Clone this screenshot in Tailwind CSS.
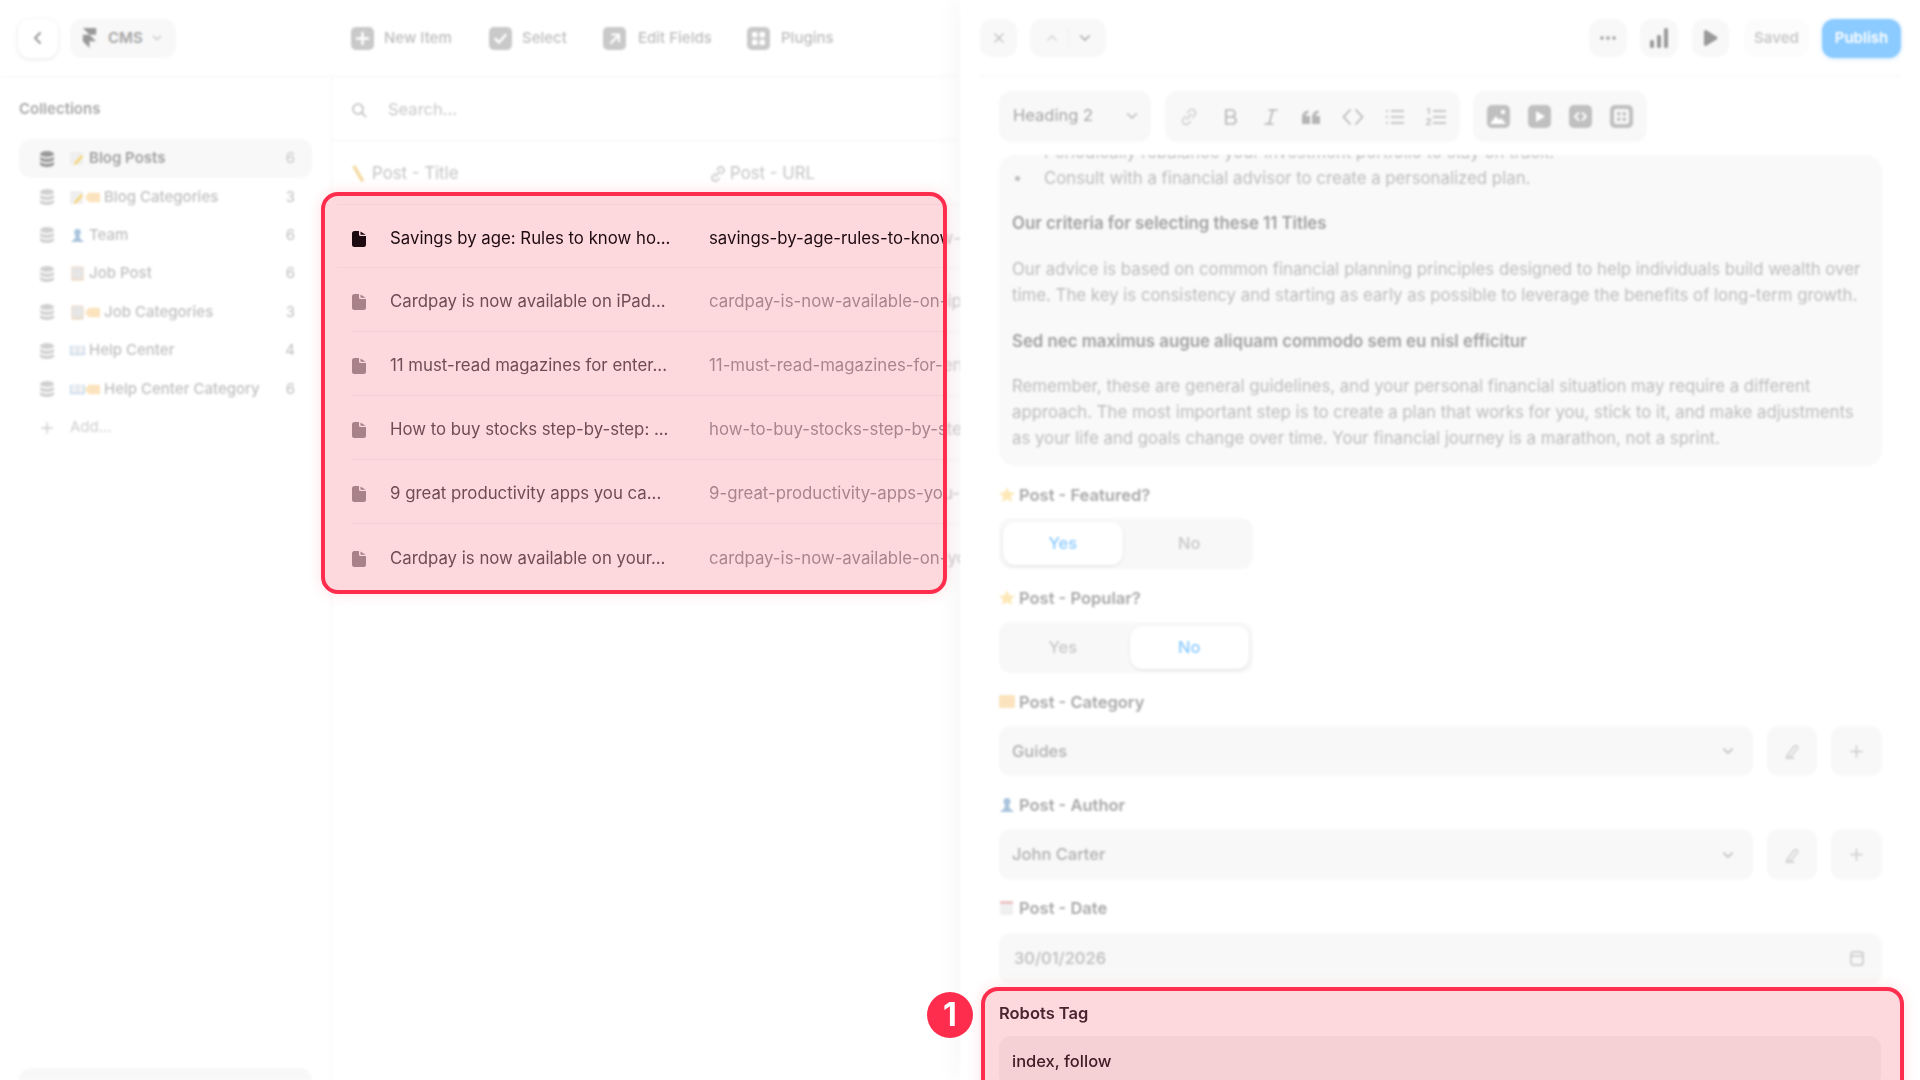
<!DOCTYPE html>
<html lang="en">
<head>
    <meta charset="UTF-8">
    <meta name="viewport" content="width=device-width, initial-scale=1.0">
    <title>CMS - Blog Posts</title>
    <script src="https://cdn.jsdelivr.net/npm/@tailwindcss/browser@4"></script>
</head>
<body class="bg-white font-['Inter',sans-serif] overflow-hidden">

    <!-- icons used many times -->
    <svg class="hidden">
        <symbol id="db" viewBox="0 0 14 16"><ellipse cx="7" cy="3" rx="7" ry="3" fill="currentColor"/><path d="M0 5.500c1.500 1.600 4 2.200 7 2.200s5.500-.6 7-2.200V8c0 1.700-3.100 3-7 3S0 9.700 0 8z" fill="currentColor"/><path d="M0 10.500c1.500 1.600 4 2.200 7 2.200s5.500-.6 7-2.200V13c0 1.700-3.100 3-7 3s-7-1.300-7-3z" fill="currentColor"/></symbol>
        <symbol id="file" viewBox="0 0 14 16"><path d="M2.500 0H7v3.500A1.500 1.500 0 0 0 8.500 5H14v8.500a2.500 2.500 0 0 1-2.500 2.500h-9A2.500 2.500 0 0 1 0 13.500v-11A2.500 2.500 0 0 1 2.500 0zM8.500 0.500 13.700 3.800H9a.5.5 0 0 1-.5-.5z" fill="currentColor"/></symbol>
        <symbol id="pencil" viewBox="0 0 16 16"><rect x="0" y="1" width="14" height="14" rx="2" fill="#efefef"/><path d="M12 4l2 2-7 8-3 1 1-3z" fill="#f6d77e"/></symbol>
        <symbol id="tag" viewBox="0 0 16 16"><path d="M4 3h11a1 1 0 0 1 1 1v8a1 1 0 0 1-1 1H4L0 8z" fill="#fbe3bd"/></symbol>
        <symbol id="person" viewBox="0 0 16 16"><circle cx="8" cy="4.500" r="3.500" fill="#a9c4dc"/><path d="M6 7h4l.5 4L15 15H1l4.500-4z" fill="#a9c4dc"/></symbol>
        <symbol id="pad" viewBox="0 0 16 16"><rect x="1.500" y="0.500" width="13" height="15" rx="1.500" fill="#ecd6bf"/><rect x="2.500" y="1.500" width="11" height="12" fill="#e6e6e6"/></symbol>
        <symbol id="book" viewBox="0 0 16 16"><path d="M0 3h16v10H0z" fill="#c5d9ec"/><path d="M1.500 3.500h6v8h-6zM8.500 3.500h6v8h-6z" fill="#f2f2f2"/></symbol>
        <symbol id="star" viewBox="0 0 16 16"><path d="M8 0l2.400 5.200 5.600.6-4.100 3.700 1.200 5.500L8 12.200 2.900 15l1.200-5.500L0 5.800l5.600-.6z" fill="#fde9b8"/></symbol>
        <symbol id="chev" viewBox="0 0 10 10"><path d="M2 3.500 5 6.500 8 3.500" fill="none" stroke="currentColor" stroke-width="1.300" stroke-linecap="round" stroke-linejoin="round"/></symbol>
        <symbol id="pen" viewBox="0 0 16 16"><path d="M3 12.500 10.500 3a2 2 0 0 1 3 2.500L6.500 13.500 3 14.500zM2 15h8" fill="none" stroke="currentColor" stroke-width="1.300" stroke-linecap="round" stroke-linejoin="round"/></symbol>
        <symbol id="plus" viewBox="0 0 16 16"><path d="M8 2v12M2 8h12" fill="none" stroke="currentColor" stroke-width="1.600" stroke-linecap="round"/></symbol>
    </svg>

    <!-- dimmed page -->
    <div class="flex w-[1920px] h-[1080px] overflow-hidden blur-[1px]">

        <!-- left: cms -->
        <div class="w-[960px] shrink-0 flex flex-col overflow-hidden">
            <div class="h-[77px] shrink-0 flex items-center border-b border-[#f6f6f6] pl-[18px]">
                <div class="w-[40px] h-[39px] rounded-xl bg-white shadow-[0_1px_5px_rgba(0,0,0,0.1)] flex items-center justify-center text-[#999]">
                    <svg class="w-[14px] h-[14px]" viewBox="0 0 14 14"><path d="M9 2 4 7l5 5" fill="none" stroke="currentColor" stroke-width="2" stroke-linecap="round" stroke-linejoin="round"/></svg>
                </div>
                <div class="ml-[12px] w-[106px] h-[39px] rounded-xl bg-[#f8f8f8] flex items-center pl-[12px] text-[#a5a5a5]">
                    <svg class="w-[15px] h-[20px]" viewBox="0 0 16 24"><path d="M0 0h16v8H8zM0 8h8l8 8H8v8l-8-8z" fill="#999"/></svg>
                    <span class="ml-[11px] text-[15px] font-semibold">CMS</span>
                    <svg class="ml-[8px] w-[12px] h-[12px] text-[#ccc]"><use href="#chev"/></svg>
                </div>
                <div class="ml-[175px] flex items-center text-[15px] font-medium text-[#bdbdbd]">
                    <svg class="w-[23px] h-[23px]" viewBox="0 0 23 23"><rect width="23" height="23" rx="5" fill="#c9c9c9"/><path d="M11.500 6v11M6 11.500h11" stroke="#fff" stroke-width="2.500" stroke-linecap="round"/></svg>
                    <span class="ml-[10px] w-[105px]">New Item</span>
                    <svg class="w-[23px] h-[23px]" viewBox="0 0 23 23"><rect width="23" height="23" rx="5" fill="#c9c9c9"/><path d="m6.500 12 3.500 3.500 6.500-7.500" fill="none" stroke="#fff" stroke-width="2.500" stroke-linecap="round" stroke-linejoin="round"/></svg>
                    <span class="ml-[10px] w-[81px]">Select</span>
                    <svg class="w-[23px] h-[23px]" viewBox="0 0 23 23"><rect width="23" height="23" rx="5" fill="#c9c9c9"/><path d="M8 16 15.500 8M9 7.500h7v7" fill="none" stroke="#fff" stroke-width="2.200" stroke-linecap="round" stroke-linejoin="round"/></svg>
                    <span class="ml-[12px] w-[109px]">Edit Fields</span>
                    <svg class="w-[23px] h-[23px]" viewBox="0 0 23 23"><rect width="23" height="23" rx="5" fill="#c9c9c9"/><rect x="5" y="5" width="5.500" height="5.500" rx="1.500" fill="#fff"/><rect x="12.500" y="5" width="5.500" height="5.500" rx="1.500" fill="#fff"/><rect x="5" y="12.500" width="5.500" height="5.500" rx="1.500" fill="#fff"/><rect x="12.500" y="12.500" width="5.500" height="5.500" rx="1.500" fill="#fff"/></svg>
                    <span class="ml-[11px]">Plugins</span>
                </div>
            </div>

            <div class="flex-1 flex min-h-0">
                <!-- collections -->
                <div class="w-[332px] shrink-0 border-r border-[#f6f6f6] flex flex-col px-[19px] pt-[22px]">
                    <div class="h-[20px] text-[15px] leading-[20px] font-semibold text-[#a8a8a8] mb-[20px]">Collections</div>
                    <div class="h-[39px] rounded-xl bg-[#f8f8f8] flex items-center pl-[21px] pr-[17px] text-[15px] font-semibold text-[#a0a0a0]">
                        <svg class="w-[14px] h-[16px] text-[#999]"><use href="#db"/></svg>
                        <svg class="ml-[16px] w-[15px] h-[15px]"><use href="#pencil"/></svg>
                        <span class="ml-[4px] flex-1">Blog Posts</span><span class="font-normal text-[#c8c8c8]">6</span>
                    </div>
                    <div class="h-[38px] flex items-center pl-[21px] pr-[17px] text-[15px] font-medium text-[#c0c0c0]">
                        <svg class="w-[14px] h-[16px] text-[#d0d0d0]"><use href="#db"/></svg>
                        <svg class="ml-[16px] w-[15px] h-[15px]"><use href="#pencil"/></svg><svg class="w-[15px] h-[15px]"><use href="#tag"/></svg>
                        <span class="ml-[4px] flex-1">Blog Categories</span><span class="font-normal">3</span>
                    </div>
                    <div class="h-[38px] flex items-center pl-[21px] pr-[17px] text-[15px] font-medium text-[#c0c0c0]">
                        <svg class="w-[14px] h-[16px] text-[#d0d0d0]"><use href="#db"/></svg>
                        <svg class="ml-[16px] w-[15px] h-[15px]"><use href="#person"/></svg>
                        <span class="ml-[4px] flex-1">Team</span><span class="font-normal">6</span>
                    </div>
                    <div class="h-[39px] flex items-center pl-[21px] pr-[17px] text-[15px] font-medium text-[#c0c0c0]">
                        <svg class="w-[14px] h-[16px] text-[#d0d0d0]"><use href="#db"/></svg>
                        <svg class="ml-[16px] w-[15px] h-[15px]"><use href="#pad"/></svg>
                        <span class="ml-[4px] flex-1">Job Post</span><span class="font-normal">6</span>
                    </div>
                    <div class="h-[38px] flex items-center pl-[21px] pr-[17px] text-[15px] font-medium text-[#c0c0c0]">
                        <svg class="w-[14px] h-[16px] text-[#d0d0d0]"><use href="#db"/></svg>
                        <svg class="ml-[16px] w-[15px] h-[15px]"><use href="#pad"/></svg><svg class="w-[15px] h-[15px]"><use href="#tag"/></svg>
                        <span class="ml-[4px] flex-1">Job Categories</span><span class="font-normal">3</span>
                    </div>
                    <div class="h-[39px] flex items-center pl-[21px] pr-[17px] text-[15px] font-medium text-[#c0c0c0]">
                        <svg class="w-[14px] h-[16px] text-[#d0d0d0]"><use href="#db"/></svg>
                        <svg class="ml-[16px] w-[15px] h-[15px]"><use href="#book"/></svg>
                        <span class="ml-[4px] flex-1">Help Center</span><span class="font-normal">4</span>
                    </div>
                    <div class="h-[38px] flex items-center pl-[21px] pr-[17px] text-[15px] font-medium text-[#c0c0c0]">
                        <svg class="w-[14px] h-[16px] text-[#d0d0d0]"><use href="#db"/></svg>
                        <svg class="ml-[16px] w-[15px] h-[15px]"><use href="#book"/></svg><svg class="w-[15px] h-[15px]"><use href="#tag"/></svg>
                        <span class="ml-[4px] flex-1">Help Center Category</span><span class="font-normal">6</span>
                    </div>
                    <div class="h-[39px] flex items-center pl-[21px] text-[15px] text-[#d0d0d0]">
                        <svg class="w-[14px] h-[14px]"><use href="#plus"/></svg>
                        <span class="ml-[16px]">Add...</span>
                    </div>
                    <div class="mt-auto h-[12px] rounded-t-xl bg-[#f8f8f8]"></div>
                </div>

                <!-- table -->
                <div class="flex-1 min-w-0">
                    <div class="h-[64px] border-b border-[#f6f6f6] flex items-center pl-[19px] pt-[2px] text-[16.500px] text-[#c8c8c8]">
                        <svg class="w-[16px] h-[16px]" viewBox="0 0 16 16"><circle cx="7" cy="7" r="5" fill="none" stroke="#bbb" stroke-width="1.500"/><path d="m11 11 3.500 3.500" stroke="#bbb" stroke-width="1.500" stroke-linecap="round"/></svg>
                        <span class="ml-[21px]">Search...</span>
                    </div>
                    <div class="h-[63px] flex items-center pl-[19px] pt-[2px] text-[16.800px] text-[#c4c4c4]">
                        <div class="w-[358px] flex items-center"><svg class="w-[18px] h-[18px]" viewBox="0 0 16 16"><path d="M1 1 4 .5 12 14l-3 1z" fill="#f3d9a0"/></svg><span class="ml-[3px]">Post - Title</span></div>
                        <div class="flex items-center"><svg class="w-[18px] h-[18px]" viewBox="0 0 16 16"><path d="M6 10 10 5M7 4l2-2a3 3 0 0 1 4 4l-2 2M9 12l-2 2a3 3 0 0 1-4-4l2-2" fill="none" stroke="#ccc" stroke-width="1.500" stroke-linecap="round"/></svg><span class="ml-[3px]">Post - URL</span></div>
                    </div>
                    <!-- the rows sit under the highlight; only the ends of the urls show past it -->
                    <div class="ml-[7px] text-[16.800px] text-[#ccc] whitespace-nowrap">
                        <div class="h-[64px] flex items-center pl-[370px] pt-[5px] overflow-hidden border-y border-[#f6f6f6]">savings-by-age-rules-to-know-how-much</div>
                        <div class="h-[64px] flex items-center pl-[370px] pt-[5px] overflow-hidden border-b border-[#f6f6f6]">cardpay-is-now-available-on-ipad-and-more</div>
                        <div class="h-[64px] flex items-center pl-[370px] pt-[5px] overflow-hidden border-b border-[#f6f6f6]">11-must-read-magazines-for-entrepreneurs</div>
                        <div class="h-[64px] flex items-center pl-[370px] pt-[5px] overflow-hidden border-b border-[#f6f6f6]">how-to-buy-stocks-step-by-step-guide</div>
                        <div class="h-[64px] flex items-center pl-[370px] pt-[5px] overflow-hidden border-b border-[#f6f6f6]">9-great-productivity-apps-you-can-use</div>
                        <div class="h-[64px] flex items-center pl-[370px] pt-[5px] overflow-hidden">cardpay-is-now-available-on-your-watch</div>
                    </div>
                </div>
            </div>
        </div>

        <!-- right: item editor -->
        <div class="w-[960px] shrink-0 bg-white shadow-[-4px_0_24px_rgba(0,0,0,0.04)] flex flex-col">
            <div class="h-[77px] shrink-0 ml-[20px] mr-[19px] border-b border-[#f6f6f6] flex items-center">
                <div class="w-[37px] h-[38px] rounded-xl bg-[#f8f8f8] flex items-center justify-center text-[#c4c4c4]">
                    <svg class="w-[12px] h-[12px]" viewBox="0 0 12 12"><path d="m2 2 8 8M10 2l-8 8" stroke="currentColor" stroke-width="1.500" stroke-linecap="round"/></svg>
                </div>
                <div class="ml-[13px] w-[76px] h-[38px] rounded-xl bg-[#f8f8f8] flex items-center justify-center text-[#b5b5b5]">
                    <svg class="w-[14px] h-[14px] rotate-180 text-[#dcdcdc]"><use href="#chev"/></svg>
                    <div class="w-px h-[20px] bg-[#eeeeee] mx-[9px]"></div>
                    <svg class="w-[14px] h-[14px]"><use href="#chev"/></svg>
                </div>
                <div class="ml-auto flex items-center">
                    <div class="w-[38px] h-[38px] rounded-xl bg-[#f8f8f8] flex items-center justify-center">
                        <svg class="w-[16px] h-[4px]" viewBox="0 0 16 4"><circle cx="2" cy="2" r="1.700" fill="#999"/><circle cx="8" cy="2" r="1.700" fill="#999"/><circle cx="14" cy="2" r="1.700" fill="#999"/></svg>
                    </div>
                    <div class="ml-[13px] w-[38px] h-[38px] rounded-xl bg-[#f8f8f8] flex items-center justify-center">
                        <svg class="w-[18px] h-[20px]" viewBox="0 0 18 20"><rect y="12" width="4" height="8" rx="1.500" fill="#999"/><rect x="7" y="7" width="4" height="13" rx="1.500" fill="#999"/><rect x="14" y="0" width="4" height="20" rx="1.500" fill="#999"/></svg>
                    </div>
                    <div class="ml-[14px] w-[37px] h-[38px] rounded-xl bg-[#f8f8f8] flex items-center justify-center">
                        <svg class="w-[15px] h-[18px]" viewBox="0 0 15 18"><path d="M1 2.500v13a1.500 1.500 0 0 0 2.300 1.200l10.500-6.500a1.500 1.500 0 0 0 0-2.500L3.300 1.300A1.500 1.500 0 0 0 1 2.500z" fill="#999"/></svg>
                    </div>
                    <div class="ml-[15px] w-[65px] h-[38px] rounded-xl bg-[#fcfcfc] flex items-center justify-center text-[15px] font-semibold text-[#c8c8c8]">Saved</div>
                    <div class="ml-[13px] w-[79px] h-[39px] rounded-xl bg-[#8ccbff] shadow-[0_1px_4px_rgba(140,203,255,0.4)] flex items-center justify-center text-[15px] font-semibold text-white">Publish</div>
                </div>
            </div>

            <div class="flex-1 min-h-0 pl-[39px] pr-[38px]">
                <!-- format toolbar -->
                <div class="mt-[14px] h-[51px] flex">
                    <div class="w-[152px] rounded-xl bg-[#f8f8f8] flex items-center pl-[14px] pr-[12px] pb-[2px] text-[16.500px] text-[#a5a5a5]">
                        <span class="flex-1">Heading 2</span>
                        <svg class="w-[14px] h-[14px] text-[#c4c4c4]"><use href="#chev"/></svg>
                    </div>
                    <div class="ml-[14px] w-[295px] rounded-xl bg-[#f8f8f8] flex items-center justify-between px-[13px] text-[#b5b5b5]">
                        <svg class="w-[22px] h-[22px] text-[#cccccc]" viewBox="0 0 22 22"><path d="M9 13l4-5M9.500 6.500l2-2a3.500 3.500 0 0 1 5 5l-2 2M12.500 15.500l-2 2a3.500 3.500 0 0 1-5-5l2-2" fill="none" stroke="currentColor" stroke-width="1.500" stroke-linecap="round"/></svg>
                        <svg class="w-[22px] h-[22px]" viewBox="0 0 22 22"><path d="M7 4h5.500a3.500 3.500 0 0 1 0 7H7zM7 11h6.500a3.500 3.500 0 0 1 0 7H7z" fill="none" stroke="currentColor" stroke-width="1.700"/></svg>
                        <svg class="w-[22px] h-[22px]" viewBox="0 0 22 22"><path d="M9 4h8M5 18h8M13 4 9 18" fill="none" stroke="currentColor" stroke-width="1.700" stroke-linecap="round"/></svg>
                        <svg class="w-[22px] h-[22px]" viewBox="0 0 22 22"><path d="M2 11.500C2 8 4 5 8.500 4.500v2.500C6.500 7.500 5.500 8.500 5.500 10H10v8H2zM12 11.500C12 8 14 5 18.500 4.500v2.500C16.500 7.500 15.500 8.500 15.500 10H20v8h-8z" fill="currentColor"/></svg>
                        <svg class="w-[24px] h-[22px]" viewBox="0 0 24 22"><path d="M9 4 2.500 11 9 18M15 4l6.500 7L15 18" fill="none" stroke="currentColor" stroke-width="1.700" stroke-linecap="round" stroke-linejoin="round"/></svg>
                        <svg class="w-[22px] h-[22px]" viewBox="0 0 22 22"><path d="M7 5h13M7 11h13M7 17h13" stroke="currentColor" stroke-width="1.700"/><path d="M2 5h2M2 11h2M2 17h2" stroke="currentColor" stroke-width="1.700"/></svg>
                        <svg class="w-[22px] h-[22px]" viewBox="0 0 22 22"><path d="M8 5h13M8 11h13M8 17h13" stroke="currentColor" stroke-width="1.700"/><path d="M2.500 3.500 4 2.500V8M1.500 14c.5-1.500 4-1.500 4 .3 0 1.500-3.500 2.500-4 4.200h4.500" fill="none" stroke="currentColor" stroke-width="1.200"/></svg>
                    </div>
                    <div class="ml-[13px] w-[174px] rounded-xl bg-[#f8f8f8] flex items-center justify-between px-[14px]">
                        <svg class="w-[23px] h-[23px]" viewBox="0 0 23 23"><rect width="23" height="23" rx="5" fill="#c0c0c0"/><path d="M3 19 9 11l3 4 2-2 5 6z" fill="#fff"/><circle cx="16" cy="7" r="2.200" fill="#fff"/></svg>
                        <svg class="w-[23px] h-[23px]" viewBox="0 0 23 23"><rect width="23" height="23" rx="5" fill="#c0c0c0"/><path d="M8 6v11l9-5.500z" fill="#fff"/></svg>
                        <svg class="w-[23px] h-[23px]" viewBox="0 0 23 23"><rect width="23" height="23" rx="5" fill="#c0c0c0"/><path d="M9.500 8 6 11.500 9.500 15M13.500 8l3.500 3.500-3.500 3.500" fill="none" stroke="#fff" stroke-width="2" stroke-linecap="round" stroke-linejoin="round"/></svg>
                        <svg class="w-[23px] h-[23px]" viewBox="0 0 23 23"><rect width="23" height="23" rx="5" fill="#c0c0c0"/><rect x="4" y="4" width="15" height="15" rx="2.500" fill="#f8f8f8"/><rect x="7" y="7" width="3.500" height="3.500" rx="1" fill="#c0c0c0"/><rect x="12.500" y="7" width="3.500" height="3.500" rx="1" fill="#c0c0c0"/><rect x="7" y="12.500" width="3.500" height="3.500" rx="1" fill="#c0c0c0"/><rect x="12.500" y="12.500" width="3.500" height="3.500" rx="1" fill="#c0c0c0"/></svg>
                    </div>
                </div>

                <!-- editor body -->
                <div class="mt-[13px] h-[311px] rounded-2xl bg-[#f9f9f9] overflow-hidden px-[13px] text-[16.800px] leading-[26px] text-[#bcbcbc]">
                    <ul class="-mt-[16px] pl-[3px]">
                        <li class="flex items-center"><span class="w-[5px] h-[5px] rounded-full bg-[#bcbcbc]"></span><span class="ml-[24px]">Periodically rebalance your investment portfolio to stay on track.</span></li>
                        <li class="flex items-center"><span class="w-[5px] h-[5px] rounded-full bg-[#bcbcbc]"></span><span class="ml-[24px]">Consult with a financial advisor to create a personalized plan.</span></li>
                    </ul>
                    <p class="mt-[19px] font-semibold text-[#a0a0a0]">Our criteria for selecting these 11 Titles</p>
                    <p class="mt-[20px]">Our advice is based on common financial planning principles designed to help individuals build wealth over time. The key is consistency and starting as early as possible to leverage the benefits of long-term growth.</p>
                    <p class="mt-[20px] font-semibold text-[#a0a0a0]">Sed nec maximus augue aliquam commodo sem eu nisl efficitur</p>
                    <p class="mt-[19px]">Remember, these are general guidelines, and your personal financial situation may require a different approach. The most important step is to create a plan that works for you, stick to it, and make adjustments as your life and goals change over time. Your financial journey is a marathon, not a sprint.</p>
                </div>

                <!-- fields -->
                <div class="mt-[20px] h-[20px] pb-[2px] flex items-center text-[16.500px] font-semibold text-[#a8a8a8]"><svg class="w-[16px] h-[18px] mr-[4px]"><use href="#star"/></svg>Post - Featured?</div>
                <div class="mt-[12px] w-[254px] h-[51px] rounded-xl bg-[#f8f8f8] p-[4px] flex text-[16.500px] font-medium text-[#c8c8c8]">
                    <div class="w-[120px] rounded-xl bg-white shadow-[0_1px_3px_rgba(0,0,0,0.1)] flex items-center justify-center text-[#8ccbff]">Yes</div>
                    <div class="ml-[7px] w-[120px] flex items-center justify-center">No</div>
                </div>

                <div class="mt-[20px] h-[20px] pb-[2px] flex items-center text-[16.500px] font-semibold text-[#a8a8a8]"><svg class="w-[16px] h-[18px] mr-[4px]"><use href="#star"/></svg>Post - Popular?</div>
                <div class="mt-[13px] w-[254px] h-[51px] rounded-xl bg-[#f8f8f8] p-[4px] flex text-[16.500px] font-medium text-[#c8c8c8]">
                    <div class="w-[120px] flex items-center justify-center">Yes</div>
                    <div class="ml-[7px] w-[120px] rounded-xl bg-white shadow-[0_1px_3px_rgba(0,0,0,0.1)] flex items-center justify-center text-[#8ccbff]">No</div>
                </div>

                <div class="mt-[20px] h-[20px] pb-[2px] flex items-center text-[16.500px] font-semibold text-[#a8a8a8]"><svg class="w-[16px] h-[16px] mr-[4px]" viewBox="0 0 16 16"><rect y="1" width="16" height="13" rx="2" fill="#fbe3bd"/></svg>Post - Category</div>
                <div class="mt-[13px] h-[50px] flex">
                    <div class="flex-1 rounded-xl bg-[#f8f8f8] flex items-center pl-[13px] pr-[18px] text-[16.500px] font-medium text-[#b0b0b0]"><span class="flex-1">Guides</span><svg class="w-[14px] h-[14px] text-[#c4c4c4]"><use href="#chev"/></svg></div>
                    <div class="ml-[14px] w-[50px] rounded-xl bg-[#f8f8f8] flex items-center justify-center text-[#ccc]"><svg class="w-[16px] h-[16px]"><use href="#pen"/></svg></div>
                    <div class="ml-[14px] w-[51px] rounded-xl bg-[#f8f8f8] flex items-center justify-center text-[#ccc]"><svg class="w-[15px] h-[15px]"><use href="#plus"/></svg></div>
                </div>

                <div class="mt-[20px] h-[20px] pb-[2px] flex items-center text-[16.500px] font-semibold text-[#a8a8a8]"><svg class="w-[16px] h-[18px] mr-[4px]"><use href="#person"/></svg>Post - Author</div>
                <div class="mt-[13px] h-[51px] flex">
                    <div class="flex-1 rounded-xl bg-[#f8f8f8] flex items-center pl-[13px] pr-[18px] text-[16.500px] font-medium text-[#b0b0b0]"><span class="flex-1">John Carter</span><svg class="w-[14px] h-[14px] text-[#c4c4c4]"><use href="#chev"/></svg></div>
                    <div class="ml-[14px] w-[50px] rounded-xl bg-[#f8f8f8] flex items-center justify-center text-[#ccc]"><svg class="w-[16px] h-[16px]"><use href="#pen"/></svg></div>
                    <div class="ml-[14px] w-[51px] rounded-xl bg-[#f8f8f8] flex items-center justify-center text-[#ccc]"><svg class="w-[15px] h-[15px]"><use href="#plus"/></svg></div>
                </div>

                <div class="mt-[19px] h-[20px] pb-[2px] flex items-center text-[16.500px] font-semibold text-[#a8a8a8]"><svg class="w-[16px] h-[18px] mr-[4px]" viewBox="0 0 16 16"><rect x="1" y="1" width="13" height="14" rx="1.500" fill="#f0f0f0"/><rect x="1" y="1" width="13" height="3" fill="#ecc4c4"/></svg>Post - Date</div>
                <div class="mt-[14px] h-[51px] rounded-xl bg-[#f8f8f8] flex items-center pl-[15px] pr-[18px] text-[16.500px] font-medium text-[#bcbcbc]">
                    <span class="flex-1">30/01/2026</span>
                    <svg class="w-[14px] h-[15px]" viewBox="0 0 14 15"><rect x="1" y="1" width="12" height="13" rx="2.500" fill="none" stroke="#c4c4c4" stroke-width="1.400"/><path d="M1 5h12" stroke="#c4c4c4" stroke-width="1.400"/></svg>
                </div>
            </div>
        </div>
    </div>

    <!-- highlight over the rows -->
    <div class="absolute left-[321px] top-[192px] w-[626px] h-[402px] rounded-[17px] border-[4px] border-[#ff2d4d] bg-[#fdd9de] shadow-[0_0_14px_rgba(255,45,77,0.15)] overflow-hidden pt-[8px] text-[16.800px] whitespace-nowrap text-[#6e4d55]">
        <div class="ml-[12px] pl-[14px] pt-[5px] h-[64px] flex items-center border-y border-[#f9d0d6] text-[#1d0a10]">
            <svg class="shrink-0 w-[14px] h-[16px] ml-[1px] text-[#1d0a10]"><use href="#file"/></svg>
            <span class="ml-[24px] w-[319px] shrink-0">Savings by age: Rules to know ho...</span><span class="shrink-0">savings-by-age-rules-to-know-how</span>
        </div>
        <div class="ml-[26px] pt-[5px] h-[64px] flex items-center border-b border-[#f3ced4]">
            <svg class="shrink-0 w-[14px] h-[16px] ml-[1px] text-[#a98289]"><use href="#file"/></svg>
            <span class="ml-[24px] w-[319px] shrink-0">Cardpay is now available on iPad...</span><span class="shrink-0 text-[#a8868e]">cardpay-is-now-available-on-ipad</span>
        </div>
        <div class="ml-[26px] pt-[5px] h-[64px] flex items-center border-b border-[#f3ced4]">
            <svg class="shrink-0 w-[14px] h-[16px] ml-[1px] text-[#a98289]"><use href="#file"/></svg>
            <span class="ml-[24px] w-[319px] shrink-0">11 must-read magazines for enter...</span><span class="shrink-0 text-[#a8868e]">11-must-read-magazines-for-entre</span>
        </div>
        <div class="ml-[26px] pt-[5px] h-[64px] flex items-center border-b border-[#f3ced4]">
            <svg class="shrink-0 w-[14px] h-[16px] ml-[1px] text-[#a98289]"><use href="#file"/></svg>
            <span class="ml-[24px] w-[319px] shrink-0">How to buy stocks step-by-step: ...</span><span class="shrink-0 text-[#a8868e]">how-to-buy-stocks-step-by-step</span>
        </div>
        <div class="ml-[26px] pt-[5px] h-[64px] flex items-center border-b border-[#f3ced4]">
            <svg class="shrink-0 w-[14px] h-[16px] ml-[1px] text-[#a98289]"><use href="#file"/></svg>
            <span class="ml-[24px] w-[319px] shrink-0">9 great productivity apps you ca...</span><span class="shrink-0 text-[#a8868e]">9-great-productivity-apps-you-can</span>
        </div>
        <div class="ml-[26px] pt-[5px] h-[64px] flex items-center">
            <svg class="shrink-0 w-[14px] h-[16px] ml-[1px] text-[#a98289]"><use href="#file"/></svg>
            <span class="ml-[24px] w-[319px] shrink-0">Cardpay is now available on your...</span><span class="shrink-0 text-[#a8868e]">cardpay-is-now-available-on-your</span>
        </div>
    </div>

    <!-- highlight over the robots field -->
    <div class="absolute left-[981px] top-[987px] w-[923px] h-[120px] rounded-[17px] border-[4px] border-[#ff2d4d] bg-[#fdd9de] shadow-[0_0_14px_rgba(255,45,77,0.15)] pl-[14px] pr-[19px]">
        <div class="mt-[12px] h-[20px] flex items-center text-[16.500px] font-semibold text-[#4a2530]">Robots Tag</div>
        <div class="mt-[13px] h-[51px] rounded-xl bg-[#f5d0d5] flex items-center pl-[13px] text-[16.500px] font-medium text-[#3d1c26]">index, follow</div>
    </div>

    <!-- number badge -->
    <div class="absolute left-[927px] top-[992px] w-[46px] h-[46px] rounded-full bg-[#ff2d4d] flex items-center justify-center text-[32px] font-bold text-white">1</div>

</body>
</html>
